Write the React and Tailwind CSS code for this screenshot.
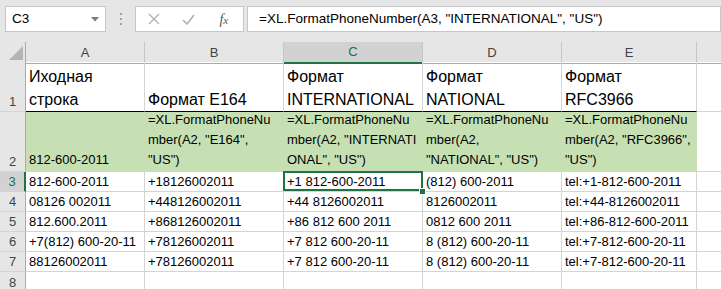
import React from 'react';

const COLS = 'grid grid-cols-[26px_119px_139px_139px_139px_135px_1fr]';
const LETTERS = ['A', 'B', 'C', 'D', 'E'];

const HEAD = [
  ['Иходная', 'строка'],
  ['Формат E164'],
  ['Формат', 'INTERNATIONAL'],
  ['Формат', 'NATIONAL'],
  ['Формат', 'RFC3966'],
];

const FORMULAS = [
  ['812-600-2011'],
  ['=XL.FormatPhoneNu', 'mber(A2, "E164",', '"US")'],
  ['=XL.FormatPhoneNu', 'mber(A2, "INTERNATI', 'ONAL", "US")'],
  ['=XL.FormatPhoneNu', 'mber(A2,', '"NATIONAL", "US")'],
  ['=XL.FormatPhoneNu', 'mber(A2, "RFC3966",', '"US")'],
];

const DATA = [
  ['812-600-2011', '+18126002011', '+1 812-600-2011', '(812) 600-2011', 'tel:+1-812-600-2011'],
  ['08126 002011', '+448126002011', '+44 8126002011', '8126002011', 'tel:+44-8126002011'],
  ['812.600.2011', '+868126002011', '+86 812 600 2011', '0812 600 2011', 'tel:+86-812-600-2011'],
  ['+7(812) 600-20-11', '+78126002011', '+7 812 600-20-11', '8 (812) 600-20-11', 'tel:+7-812-600-20-11'],
  ['88126002011', '+78126002011', '+7 812 600-20-11', '8 (812) 600-20-11', 'tel:+7-812-600-20-11'],
];

function RowHead({ n, active }) {
  return (
    <div className={`flex items-end justify-center leading-[19px] border-b border-[#d4d4d4] ${active ? 'bg-[#d2d2d2] text-[#217346] border-r-2 border-r-[#217346]' : 'bg-[#e6e6e6] text-[#444] border-r border-r-[#ababab]'}`}>
      {n}
    </div>
  );
}

export default function App() {
  return (
    <div className="w-[721px] h-[289px] overflow-hidden bg-white text-[13px] text-black font-['Liberation_Sans',sans-serif]">
      {/* formula bar */}
      <div className="h-[42px] bg-[#e6e6e6] flex items-start pt-[6px] pl-[5px]">
        <div className="w-[102px] h-[26px] bg-white border border-[#c6c6c6] flex items-center justify-between pl-[6px] pr-[6px] text-[13.5px]">
          <span>C3</span>
          <svg width="8" height="5" viewBox="0 0 8 5"><path d="M0 0h8L4 4.5z" fill="#7a7a7a" /></svg>
        </div>
        <div className="w-[30px] h-[26px] flex flex-col items-center justify-center gap-[3px]">
          <span className="w-[2px] h-[2px] bg-[#a0a0a0]" />
          <span className="w-[2px] h-[2px] bg-[#a0a0a0]" />
          <span className="w-[2px] h-[2px] bg-[#a0a0a0]" />
        </div>
        <div className="w-[110px] h-[26px] bg-white border border-[#c6c6c6] flex items-center">
          <svg className="ml-[12px]" width="12" height="12" viewBox="0 0 12 12"><path d="M1 1l10 10M11 1L1 11" stroke="#b0b0b0" strokeWidth="1.3" /></svg>
          <svg className="ml-[22px]" width="13" height="11" viewBox="0 0 13 11"><path d="M1 6l4 4 7-9" stroke="#b0b0b0" strokeWidth="1.6" fill="none" /></svg>
          <span className="ml-[24px] italic text-[14px] text-[#555] font-['Liberation_Serif',serif]">f<span className="text-[11px]">x</span></span>
        </div>
        <div className="ml-[3px] w-[480px] h-[26px] bg-white border border-[#c6c6c6] flex items-center pl-[11px] whitespace-nowrap text-[13.5px]">
          =XL.FormatPhoneNumber(A3, "INTERNATIONAL", "US")
        </div>
      </div>

      {/* column headers */}
      <div className={`${COLS} h-[20px] bg-[#e6e6e6] text-[#444]`}>
        <div className="border-r border-b border-[#ababab] flex items-end justify-end pr-[2px] pb-[3px]">
          <svg width="14" height="14" viewBox="0 0 14 14"><path d="M14 0v14H0z" fill="#b4b4b4" /></svg>
        </div>
        {LETTERS.map(l => (
          <div key={l} className={`flex items-center justify-center border-r border-r-[#c6c6c6] ${l === 'C' ? 'bg-[#d2d2d2] text-[#217346] border-b-2 border-b-[#217346]' : 'border-b border-b-[#ababab]'}`}>
            {l}
          </div>
        ))}
        <div className="border-b border-[#ababab]" />
      </div>

      {/* row 1 */}
      <div className={`${COLS} h-[50px]`}>
        <RowHead n={1} />
        {HEAD.map((lines, i) => (
          <div key={i} className="flex flex-col justify-end pl-[3px] border-r border-r-[#d4d4d4] border-b border-b-black text-[16px] leading-[23px] whitespace-nowrap overflow-hidden">
            {lines.map((t, j) => <div key={j}>{t}</div>)}
          </div>
        ))}
        <div className="border-b border-[#d4d4d4]" />
      </div>

      {/* row 2 */}
      <div className={`${COLS} h-[60px]`}>
        <RowHead n={2} />
        {FORMULAS.map((lines, i) => (
          <div key={i} className="flex flex-col justify-end pl-[3px] pb-[1px] bg-[#c6e0b4] border-b border-[#d4d4d4] leading-[20px] whitespace-nowrap overflow-hidden">
            {lines.map((t, j) => <div key={j}>{t}</div>)}
          </div>
        ))}
        <div className="border-b border-[#d4d4d4]" />
      </div>

      {/* data rows */}
      {DATA.map((row, r) => (
        <div key={r} className={`${COLS} h-[20px]`}>
          <RowHead n={r + 3} active={r === 0} />
          {row.map((t, i) => (
            <div key={i} className={`relative pl-[3px] leading-[19px] border-r border-b border-[#d4d4d4] whitespace-nowrap ${r === 0 && i === 2 ? 'z-10' : ''}`}>
              {t}
              {r === 0 && i === 2 && (
                <>
                  <div className="absolute -left-px -top-px -right-px bottom-0 border-2 border-[#217346]" />
                  <div className="absolute right-[-4px] bottom-[-4px] w-[7px] h-[7px] bg-[#217346] border border-white" />
                </>
              )}
            </div>
          ))}
          <div className="border-b border-[#d4d4d4]" />
        </div>
      ))}

      {/* row 8 */}
      <div className={`${COLS} h-[30px]`}>
        <div className="bg-[#e6e6e6] text-[#444] border-r border-[#ababab] flex justify-center pt-[1px]">8</div>
        {LETTERS.map(l => <div key={l} className="border-r border-[#d4d4d4]" />)}
        <div />
      </div>
    </div>
  );
}
